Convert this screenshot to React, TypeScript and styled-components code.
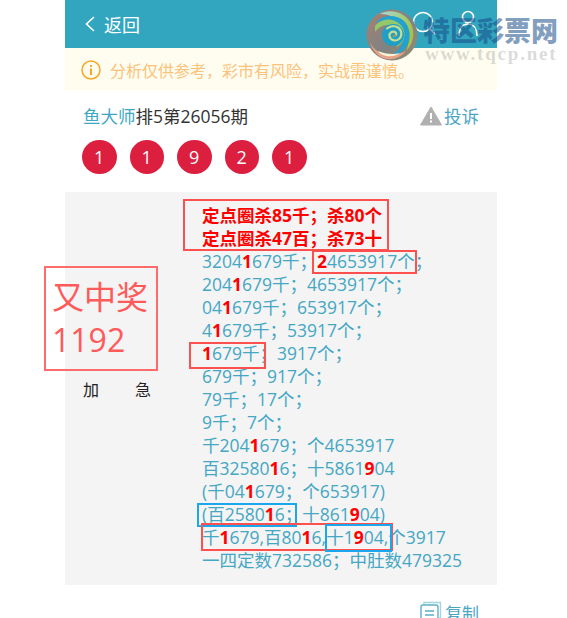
import React from 'react';
import styled, { createGlobalStyle } from 'styled-components';

const GlobalStyle = createGlobalStyle`
  html, body {
    margin: 0;
    padding: 0;
    height: 618px;
    overflow: hidden;
    background: #fff;
    font-family: "Open Sans", "Noto Sans CJK SC", sans-serif;
  }
`;

const Page = styled.div`
  position: relative;
  width: 432px;
  margin-left: 65px;
`;

const Header = styled.header`
  display: flex;
  align-items: center;
  justify-content: space-between;
  height: 48px;
  padding: 0 19px 0 20px;
  background: #33a6bf;
  color: #fff;
`;

const BackLink = styled.div`
  display: flex;
  align-items: center;
  gap: 9px;
  font-size: 18px;
`;

const HeaderIcons = styled.div`
  display: flex;
  align-items: center;
  gap: 22px;
`;

const Notice = styled.div`
  display: flex;
  align-items: center;
  gap: 9px;
  height: 43px;
  padding-left: 16px;
  background: #fffdf0;
  color: #fcc27a;
  font-size: 16px;
`;

const TitleRow = styled.div`
  display: flex;
  align-items: center;
  justify-content: space-between;
  height: 49px;
  padding: 0 18px;
  font-size: 17.5px;
  color: #333;
`;

const Teal = styled.span`
  color: #3ea8c4;
`;

const Complain = styled.div`
  display: flex;
  align-items: center;
  gap: 2px;
  color: #4ba6c4;
`;

const Balls = styled.div`
  display: flex;
  gap: 13px;
  height: 34px;
  padding-left: 17px;
  margin-bottom: 18px;
`;

const Ball = styled.div`
  display: flex;
  align-items: center;
  justify-content: center;
  width: 34.5px;
  height: 34px;
  border-radius: 50%;
  background: #dc1f3f;
  color: #fff;
  font-size: 18px;
`;

const Panel = styled.section`
  display: flex;
  height: 393px;
  background: #f4f4f4;
  box-sizing: border-box;
  padding-top: 12px;
`;

const SideColumn = styled.div`
  display: flex;
  justify-content: space-between;
  align-items: flex-start;
  box-sizing: border-box;
  width: 137px;
  padding: 173px 51px 0 18px;
  font-size: 16px;
  color: #222;
`;

const Lines = styled.div`
  font-size: 17.5px;
  line-height: 23px;
  color: #44a7c4;
  white-space: nowrap;
`;

const Line = styled.div<{ $strong?: boolean }>`
  color: ${(p) => (p.$strong ? '#f00' : 'inherit')};
  font-weight: ${(p) => (p.$strong ? 700 : 400)};
`;

const Hit = styled.b`
  color: #f00;
`;

const Mark = styled.div<{ $x: number; $y: number; $w: number; $h: number; $blue?: boolean }>`
  position: absolute;
  left: ${(p) => p.$x - 65}px;
  top: ${(p) => p.$y}px;
  width: ${(p) => p.$w}px;
  height: ${(p) => p.$h}px;
  box-sizing: border-box;
  border: 2px solid ${(p) => (p.$blue ? '#1aa7ee' : '#ff5050')};
`;

const PrizeBox = styled.div`
  position: absolute;
  left: -21px;
  top: 266px;
  width: 114px;
  height: 105px;
  box-sizing: border-box;
  padding: 7px 0 0 6px;
  border: 2px solid #ff6b6b;
  color: #ff5a5a;
  font-size: 32px;
  line-height: 43px;
`;

const CopyRow = styled.div`
  display: flex;
  align-items: center;
  justify-content: flex-end;
  gap: 3px;
  height: 54px;
  padding-right: 18px;
  color: #4ba6c4;
  font-size: 17px;
`;

const Watermark = styled.div`
  position: absolute;
  left: 301px;
  top: 9px;
  width: 200px;
  height: 56px;
  display: flex;
`;

const WatermarkText = styled.div`
  margin-left: 5px;
  padding-top: 6px;
`;

const WatermarkTitle = styled.div`
  font-family: "Noto Sans CJK SC", sans-serif;
  font-size: 27px;
  line-height: 30px;
  font-weight: 900;
  color: rgba(20, 75, 135, 0.55);
  white-space: nowrap;
`;

const WatermarkUrl = styled.div`
  margin-left: 2px;
  font-family: "Liberation Serif", serif;
  font-size: 19px;
  line-height: 17px;
  font-weight: 700;
  letter-spacing: 1.8px;
  color: rgba(150, 150, 150, 0.35);
  white-space: nowrap;
`;

const SwirlLogo = () => (
  <svg width="52" height="52" viewBox="0 0 52 52">
    <defs>
      <linearGradient id="swirlBase" x1="0" y1="0" x2="1" y2="1">
        <stop offset="0" stopColor="#a9806f" />
        <stop offset="0.55" stopColor="#7f8383" />
        <stop offset="1" stopColor="#9a8a6a" />
      </linearGradient>
      <linearGradient id="swirlTop" x1="0" y1="0" x2="1" y2="0.4">
        <stop offset="0" stopColor="#a9d5e0" />
        <stop offset="0.55" stopColor="#a4cf8a" />
        <stop offset="1" stopColor="#a6c24a" />
      </linearGradient>
    </defs>
    <circle cx="26" cy="26" r="25.5" fill="url(#swirlBase)" />
    <path d="M14 5C24-1 41 3 46 17c3 9 1 18-6 25 3-7 4-14 1-21C37 12 26 5 14 5Z" fill="url(#swirlTop)" />
    <path d="M10 14C16 5 30 5 38 12c7 7 7 18 3 25-4 6-10 9-16 9 7-3 12-9 12-17 0-9-7-15-14-17-5-1-9 0-13 2Z" fill="#22a2cf" />
    <path d="M9 17c5-6 13-8 20-5 7 3 11 10 9 17-1 4-4 8-8 9 3-3 5-7 4-12-1-6-6-10-12-10-6 0-10 3-13 7Z" fill="#93c96a" />
    <path d="M4 33c3 8 12 13 22 13 5 0 10-2 14-4-5 6-12 9-19 8C13 49 6 42 4 33Z" fill="#e8a286" />
    <path d="M12 42c7 3 15 4 22 2-5 4-12 4-17 2-2-1-4-2-5-4Z" fill="#f5f4d8" />
    <circle cx="27" cy="26" r="11" fill="#1f9fc6" />
    <path d="M28 27c2.500 0 3-3 1-4-3-1.500-6 1-5.500 4 .6 4 6 6 9.500 3 3.500-3 3-9-1-11.500-3.500-2-8-1.500-11 1" fill="none" stroke="#c4dd92" strokeWidth="2.2" strokeLinecap="round" />
    <circle cx="28.500" cy="26.500" r="1.400" fill="#9a8a62" />
  </svg>
);

const lines: React.ReactNode[] = [
  <>3204<Hit>1</Hit>679千；<Hit>2</Hit>4653917个；</>,
  <>204<Hit>1</Hit>679千；4653917个；</>,
  <>04<Hit>1</Hit>679千；653917个；</>,
  <>4<Hit>1</Hit>679千；53917个；</>,
  <><Hit>1</Hit>679千；3917个；</>,
  <>679千；917个；</>,
  <>79千；17个；</>,
  <>9千；7个；</>,
  <>千204<Hit>1</Hit>679；个4653917</>,
  <>百32580<Hit>1</Hit>6；十5861<Hit>9</Hit>04</>,
  <>(千04<Hit>1</Hit>679；个653917)</>,
  <>(百2580<Hit>1</Hit>6；十861<Hit>9</Hit>04)</>,
  <>千<Hit>1</Hit>679,百80<Hit>1</Hit>6,十1<Hit>9</Hit>04,个3917</>,
  <>一四定数732586；中肚数479325</>,
];

const marks = [
  { x: 183, y: 199, w: 206, h: 52 },
  { x: 312, y: 250, w: 105, h: 24 },
  { x: 189, y: 342, w: 77, h: 27 },
  { x: 197, y: 503, w: 100, h: 24, blue: true },
  { x: 201, y: 523, w: 192, h: 28 },
  { x: 325, y: 524, w: 67, h: 28, blue: true },
];

export default function App() {
  return (
    <Page>
      <GlobalStyle />
      <Header>
        <BackLink>
          <svg width="10" height="16" viewBox="0 0 10 16" fill="none" stroke="#fff" strokeWidth="1.6">
            <path d="M9 1 1.5 8 9 15" />
          </svg>
          返回
        </BackLink>
        <HeaderIcons>
          <svg width="24" height="26" viewBox="0 0 24 26" fill="none" stroke="#fff" strokeWidth="1.6">
            <circle cx="11" cy="11" r="9.5" />
            <path d="m18 18 5 5" />
          </svg>
          <svg width="20" height="28" viewBox="0 0 20 28" fill="none" stroke="#fff" strokeWidth="1.6">
            <circle cx="10" cy="7" r="5.5" />
            <path d="M1 26c0-7 3-12 9-12s9 5 9 12" />
          </svg>
        </HeaderIcons>
      </Header>
      <Notice>
        <svg width="20" height="20" viewBox="0 0 20 20" fill="none" stroke="#f9a825" strokeWidth="1.5">
          <circle cx="10" cy="10" r="9" />
          <path d="M10 8.5v6.5M10 5v2" strokeWidth="2" />
        </svg>
        分析仅供参考，彩市有风险，实战需谨慎。
      </Notice>
      <TitleRow>
        <div>
          <Teal>鱼大师</Teal>排5第26056期
        </div>
        <Complain>
          <svg width="22" height="20" viewBox="0 0 22 20">
            <path d="M11 1 21.5 19H.5Z" fill="#b0b0b0" stroke="#b0b0b0" strokeLinejoin="round" />
            <path d="M11 7v6M11 14.5v2" stroke="#fff" strokeWidth="2" />
          </svg>
          投诉
        </Complain>
      </TitleRow>
      <Balls>
        {[1, 1, 9, 2, 1].map((n, i) => (
          <Ball key={i}>{n}</Ball>
        ))}
      </Balls>
      <Panel>
        <SideColumn>
          <span>加</span>
          <span>急</span>
        </SideColumn>
        <Lines>
          <Line $strong>定点圈杀85千；杀80个</Line>
          <Line $strong>定点圈杀47百；杀73十</Line>
          {lines.map((line, i) => (
            <Line key={i}>{line}</Line>
          ))}
        </Lines>
      </Panel>
      <CopyRow>
        <svg width="22" height="22" viewBox="0 0 22 22" fill="none" stroke="#5bb0c8" strokeWidth="1.4">
          <path d="M4 3V1.5h16.5V17H19" stroke="#a5d5e0" />
          <rect x="1" y="4" width="17" height="17" rx="2" />
          <path d="M5 10h9M5 14h9M5 18h9" />
        </svg>
        复制
      </CopyRow>
      <PrizeBox>
        又中奖
        <br />
        1192
      </PrizeBox>
      {marks.map((m, i) => (
        <Mark key={i} $x={m.x} $y={m.y} $w={m.w} $h={m.h} $blue={m.blue} />
      ))}
      <Watermark>
        <SwirlLogo />
        <WatermarkText>
          <WatermarkTitle>特区彩票网</WatermarkTitle>
          <WatermarkUrl>www.tqcp.net</WatermarkUrl>
        </WatermarkText>
      </Watermark>
    </Page>
  );
}
